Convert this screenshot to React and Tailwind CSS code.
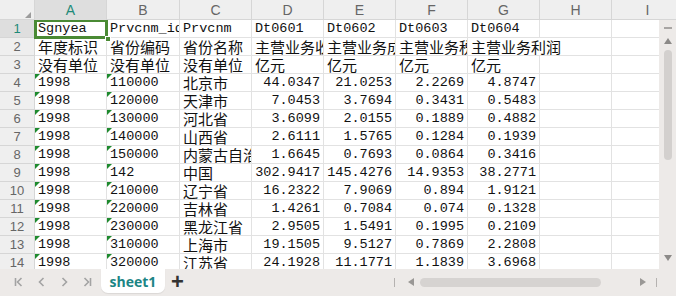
import React from 'react';

const COLS = ['A', 'B', 'C', 'D', 'E', 'F', 'G', 'H', 'I'];

const ROWS = [
  ['Sgnyea', 'Prvcnm_id', 'Prvcnm', 'Dt0601', 'Dt0602', 'Dt0603', 'Dt0604'],
  ['年度标识', '省份编码', '省份名称', '主营业务收入', '主营业务成本', '主营业务税金及附加', '主营业务利润'],
  ['没有单位', '没有单位', '没有单位', '亿元', '亿元', '亿元', '亿元'],
  ['1998', '110000', '北京市', '44.0347', '21.0253', '2.2269', '4.8747'],
  ['1998', '120000', '天津市', '7.0453', '3.7694', '0.3431', '0.5483'],
  ['1998', '130000', '河北省', '3.6099', '2.0155', '0.1889', '0.4882'],
  ['1998', '140000', '山西省', '2.6111', '1.5765', '0.1284', '0.1939'],
  ['1998', '150000', '内蒙古自治区', '1.6645', '0.7693', '0.0864', '0.3416'],
  ['1998', '142', '中国', '302.9417', '145.4276', '14.9353', '38.2771'],
  ['1998', '210000', '辽宁省', '16.2322', '7.9069', '0.894', '1.9121'],
  ['1998', '220000', '吉林省', '1.4261', '0.7084', '0.074', '0.1328'],
  ['1998', '230000', '黑龙江省', '2.9505', '1.5491', '0.1995', '0.2109'],
  ['1998', '310000', '上海市', '19.1505', '9.5127', '0.7869', '2.2808'],
  ['1998', '320000', '江苏省', '24.1928', '11.1771', '1.1839', '3.6968'],
];

const GRID = 'grid grid-cols-[35px_72px_73px_72px_72px_72px_72px_72px_72px_72px]';
const isCjk = (t) => /[\u4e00-\u9fff]/.test(t);

const Cell = ({ text, r, c }) => {
  const right = r >= 3 && c >= 3;
  const flag = r >= 3 && c <= 1;
  const spill = r === 1 && c === 6;
  const font = text && isCjk(text)
    ? "text-[15px] [font-family:'Noto_Sans_CJK_SC',sans-serif]"
    : "text-[13.5px] [font-family:'Liberation_Mono',monospace]";
  return (
    <div
      className={`relative h-[18px] leading-[18px] border-b border-[#e2e2e2] whitespace-nowrap text-[#111] ${font} ${
        spill ? 'overflow-visible z-10' : 'overflow-hidden border-r'
      } ${right ? 'text-right pr-[3px]' : 'pl-[3px]'}`}
    >
      {flag && (
        <span className="absolute left-0 top-0 w-0 h-0 border-t-[5px] border-r-[5px] border-t-[#1e8a2e] border-r-transparent" />
      )}
      {text}
    </div>
  );
};

const Chevron = ({ dir, bar }) => (
  <svg width="14" height="14" viewBox="0 0 14 14" fill="none" stroke="#a3a3a3" strokeWidth="1.6">
    {dir === 'l' ? <path d="M8.5 3 L4.5 7 L8.5 11" /> : <path d="M5.5 3 L9.5 7 L5.5 11" />}
    {bar && (dir === 'l' ? <path d="M2.5 3 V11" /> : <path d="M11.5 3 V11" />)}
  </svg>
);

export default function App() {
  return (
    <div className="w-[676px] h-[296px] overflow-hidden bg-white flex flex-col [font-family:'Liberation_Sans',sans-serif]">
      {/* column headers */}
      <div className={`${GRID} h-[20px] bg-[#efefef] border-b border-[#d6d6d6] shrink-0`}>
        <div className="relative border-r border-[#d6d6d6]">
          <span className="absolute right-[3px] bottom-[3px] w-0 h-0 border-b-[6px] border-l-[6px] border-b-[#9c9c9c] border-l-transparent" />
        </div>
        {COLS.map((c, i) => (
          <div
            key={c}
            className={`flex items-center justify-center text-[14px] border-r border-[#d6d6d6] ${
              i === 0 ? 'bg-[#dedede] text-[#1e8a78]' : 'text-[#666]'
            }`}
          >
            {c}
          </div>
        ))}
      </div>

      <div className="flex h-[249px] shrink-0">
        {/* sheet body */}
        <div className="relative w-[659px] overflow-hidden">
          {ROWS.map((row, r) => (
            <div key={r} className={GRID}>
              <div
                className={`h-[18px] flex items-center justify-center text-[13px] border-r border-b border-[#d6d6d6] ${
                  r === 0 ? 'bg-[#dedede] text-[#1e8a78]' : 'bg-[#efefef] text-[#666]'
                }`}
              >
                {r + 1}
              </div>
              {COLS.map((_, c) => (
                <Cell key={c} text={row[c] || ''} r={r} c={c} />
              ))}
            </div>
          ))}
          {/* active cell A1 */}
          <div className="absolute left-[34px] top-[-1px] w-[74px] h-[20px] border-[3px] border-[#4a8a34] pointer-events-none">
            <span className="absolute right-[-6px] bottom-[-6px] w-[6px] h-[6px] bg-[#4a8a34] border border-white" />
          </div>
        </div>

        {/* vertical scrollbar */}
        <div className="w-[17px] bg-[#edeae8] flex flex-col items-center pt-[7px]">
          <div className="w-[8px] h-[2px] bg-[#a8a5a3]" />
          <svg width="8" height="6" viewBox="0 0 8 6" className="mt-[9px]">
            <path d="M4 0 L8 6 L0 6 Z" fill="#8c8a88" />
          </svg>
          <div className="w-[8px] h-[110px] mt-[6px] rounded-full bg-[#d3d0ce]" />
          <div className="flex-1" />
          <svg width="8" height="6" viewBox="0 0 8 6" className="mb-[8px]">
            <path d="M0 0 L8 0 L4 6 Z" fill="#8c8a88" />
          </svg>
        </div>
      </div>

      {/* sheet tabs bar */}
      <div className="flex-1 bg-[#edeae8] flex items-start">
        <div className="flex items-center gap-[8px] pl-[13px] pt-[6px] w-[101px]">
          <Chevron dir="l" bar />
          <Chevron dir="l" />
          <Chevron dir="r" />
          <Chevron dir="r" bar />
        </div>
        <div className="w-[64px] h-[24px] bg-white rounded-b-[7px] shadow-[0_1px_1px_rgba(0,0,0,0.08)] flex items-center justify-center text-[14px] font-bold text-[#1c8585] [font-family:'Open_Sans',sans-serif]">
          sheet1
        </div>
        <div className="ml-[6px] mt-[2px] text-[22px] leading-[22px] font-bold text-[#333]">+</div>
        <div className="flex-1" />
        <div className="flex items-center h-[20px] mt-[3px]">
          <div className="w-[1px] h-[9px] bg-[#b5b2b0]" />
          <svg width="6" height="8" viewBox="0 0 6 8" className="ml-[13px]">
            <path d="M6 0 L6 8 L0 4 Z" fill="#9a9896" />
          </svg>
          <div className="ml-[6px] w-[181px] h-[9px] rounded-full bg-[#d6d3d1]" />
          <svg width="6" height="8" viewBox="0 0 6 8" className="ml-[39px]">
            <path d="M0 0 L6 4 L0 8 Z" fill="#9a9896" />
          </svg>
          <div className="ml-[10px] w-[1px] h-[9px] bg-[#b5b2b0]" />
          <div className="w-[19px]" />
        </div>
      </div>
    </div>
  );
}
